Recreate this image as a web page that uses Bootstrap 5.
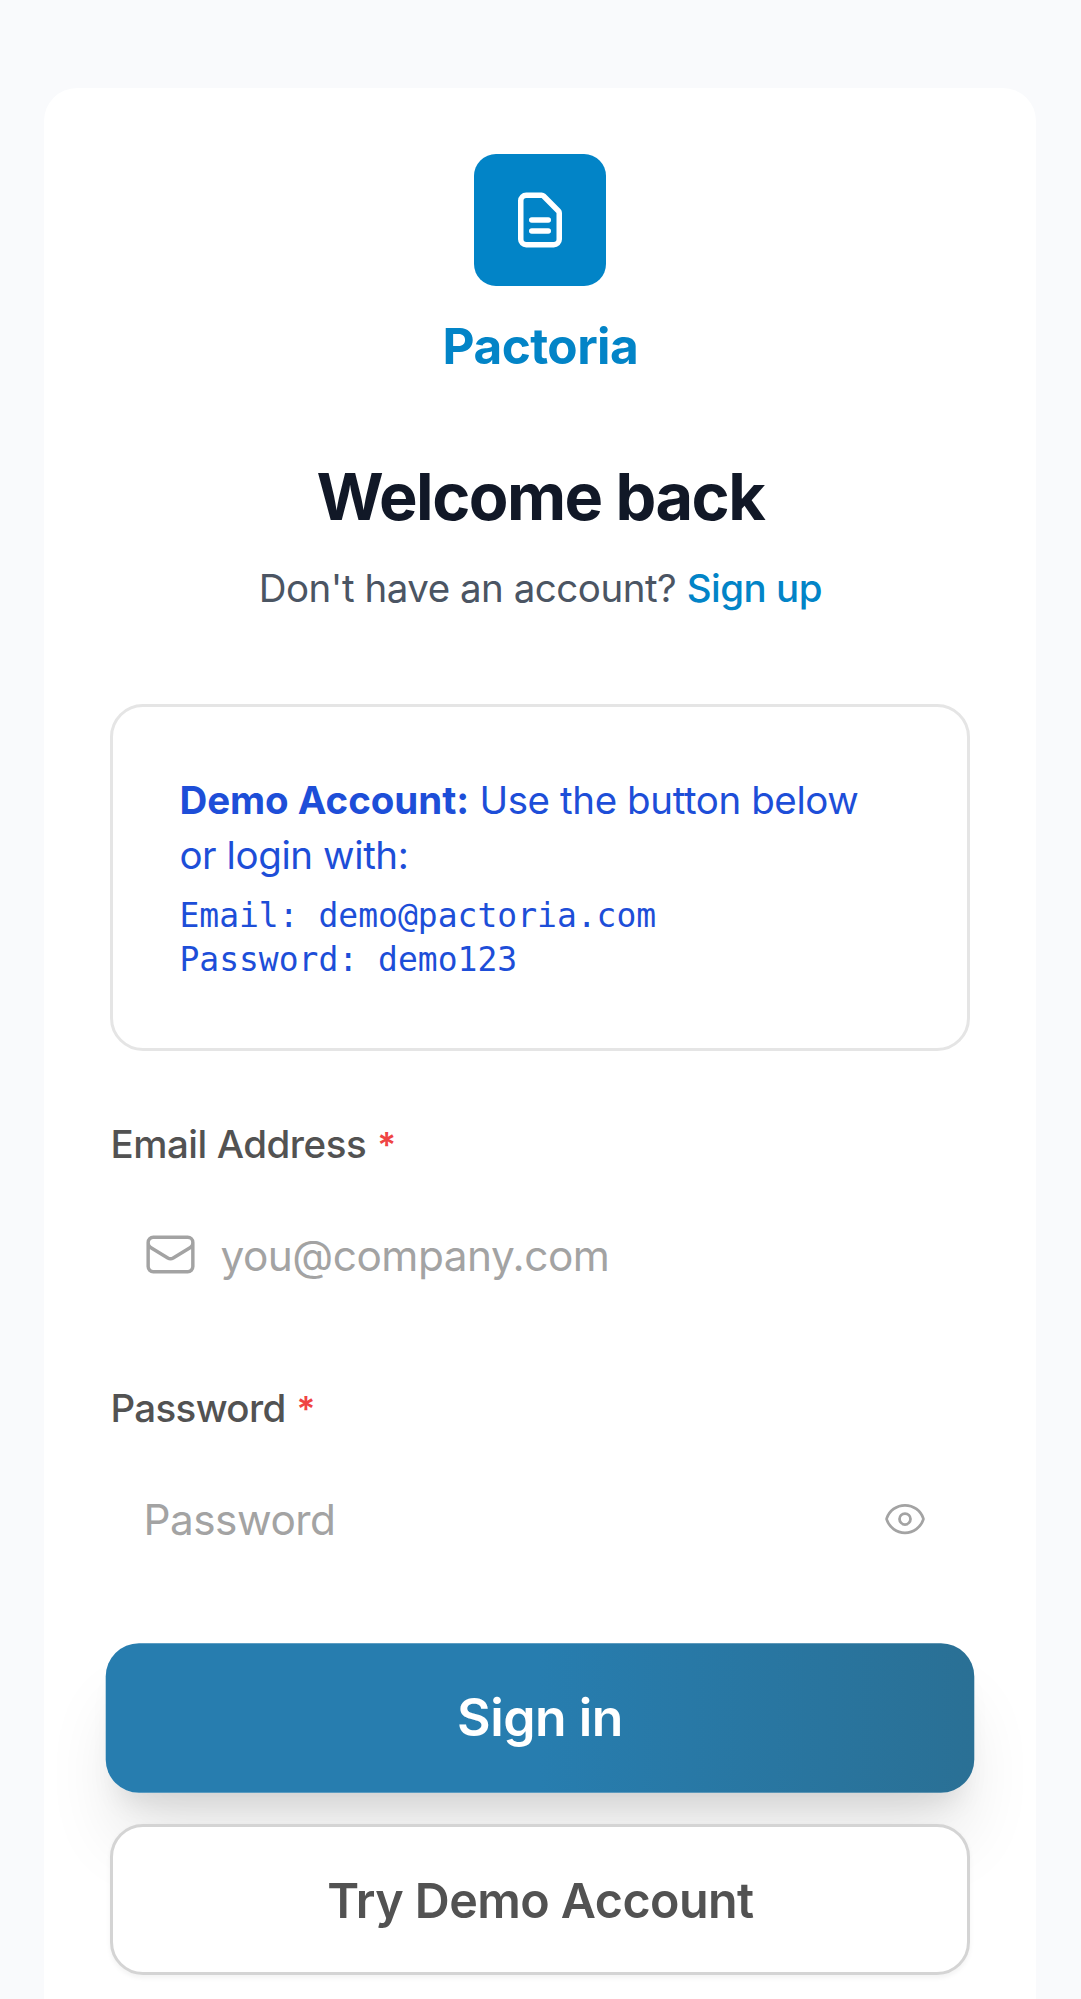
<!doctype html>
<html lang="en">
<head>
<meta charset="utf-8">
<meta name="viewport" content="width=device-width, initial-scale=1">
<title>Pactoria</title>
<link rel="stylesheet" href="https://cdn.jsdelivr.net/npm/bootstrap@5.3.0/dist/css/bootstrap.min.css">
<style>
body{background:#f9fafc;font-family:Inter,"Liberation Sans",sans-serif;font-size:38.5px;line-height:55px;letter-spacing:-.484px;color:#525252}
.login-page{padding:88px 44.6px 0 44.4px}
.login-card{border:0;border-radius:33px 33px 0 0;padding:66px 66px 0;background:#fff;min-height:1911px}
.logo-tile{width:132px;height:132px;border-radius:22px;background:#0284c7}
.brand-name{font-size:49.5px;line-height:66px;font-weight:700;letter-spacing:-.55px;color:#0284c7;margin-top:27px}
.welcome{font-size:64.8px;line-height:88px;font-weight:700;letter-spacing:-1.52px;color:#111827;margin:74px 0 0}
.signup-line{color:#4b5563;margin:20px 0 0}
.signup-line a{color:#0284c7;font-weight:500}
.demo-box{border:3px solid #e5e5e5;border-radius:33px;padding:66px;margin-top:88px;color:#1d4ed8;height:346.5px;letter-spacing:-.4px}
.demo-box strong{letter-spacing:-.05px}
.creds{font-family:"DejaVu Sans Mono",monospace;font-size:33px;line-height:44px;letter-spacing:0;margin-top:11px}
.field{margin-top:66px}
.field .form-label{display:block;font-weight:500;margin:0 0 22px;color:#525252}
.label-email{letter-spacing:-.45px}
.label-password{letter-spacing:-.65px}
.req{color:#ef4444;margin-left:11px;font-size:35px;font-weight:600;line-height:1}
.field-row{height:121px;padding:0 43px 0 33px}
.field-row .form-control{border:0;background:transparent;padding:3px 0 0;font-size:42.35px;line-height:60px;letter-spacing:-.484px;color:#525252;box-shadow:none}
.field-row .form-control::placeholder{color:#a3a3a3;opacity:1}
.mail-icon{margin-right:22px}
.eye-icon{margin-top:2px}
.btn-signin,.btn-demo{border-radius:33px;font-weight:600;letter-spacing:-.484px;padding:0}
.btn-signin,.btn-signin:hover{border:0;color:#fff;font-size:51.2px;height:148px;margin-top:65.5px;padding-bottom:2px;background:linear-gradient(90deg,#277daf 0,#277daf 50%,#2a7095 100%);box-shadow:0 55px 69px -10px rgba(0,0,0,.1),0 22px 27.5px -14px rgba(0,0,0,.1);transform:scale(1.01)}
.btn-demo,.btn-demo:hover{border:3px solid #d4d4d4;background:#fff;color:#525252;font-size:48.4px;letter-spacing:-.55px;height:151px;margin-top:32.4px;padding-top:2px;box-shadow:0 2.75px 5.5px rgba(0,0,0,.05);position:relative}
</style>
</head>
<body>
<main class="login-page">
  <div class="card login-card">
    <div class="d-flex flex-column align-items-center text-center">
      <div class="logo-tile d-flex align-items-center justify-content-center">
        <svg width="66" height="66" viewBox="0 0 24 24" fill="none" stroke="#fff" stroke-width="2" stroke-linecap="round" stroke-linejoin="round"><path d="M9 12h6m-6 4h6m2 5H7a2 2 0 01-2-2V5a2 2 0 012-2h5.586a1 1 0 01.707.293l5.414 5.414a1 1 0 01.293.707V19a2 2 0 01-2 2z"/></svg>
      </div>
      <div class="brand-name">Pactoria</div>
      <h1 class="welcome">Welcome back</h1>
      <p class="signup-line">Don't have an account? <a href="#" class="text-decoration-none">Sign up</a></p>
    </div>
    <div class="demo-box">
      <div><strong>Demo Account:</strong> Use the button below<br>or login with:</div>
      <div class="creds">Email: demo@pactoria.com<br>Password: demo123</div>
    </div>
    <form>
      <div class="field">
        <label class="form-label label-email" for="email">Email Address<span class="req">*</span></label>
        <div class="field-row d-flex align-items-center">
          <svg class="mail-icon flex-shrink-0" width="55" height="55" viewBox="0 0 24 24" fill="none" stroke="#a3a3a3" stroke-width="1.5" stroke-linecap="round" stroke-linejoin="round"><path d="M21.75 6.75v10.5a2.25 2.25 0 01-2.25 2.25h-15a2.25 2.25 0 01-2.25-2.25V6.75m19.5 0A2.25 2.25 0 0019.5 4.5h-15a2.25 2.25 0 00-2.25 2.25m19.5 0v.243a2.25 2.25 0 01-1.07 1.916l-7.5 4.615a2.25 2.25 0 01-2.36 0L3.32 8.91a2.25 2.25 0 01-1.07-1.916V6.75"/></svg>
          <input class="form-control" id="email" type="email" placeholder="you@company.com">
        </div>
      </div>
      <div class="field">
        <label class="form-label label-password" for="password">Password<span class="req">*</span></label>
        <div class="field-row d-flex align-items-center">
          <input class="form-control" id="password" type="password" placeholder="Password">
          <svg class="eye-icon flex-shrink-0" width="44" height="44" viewBox="0 0 24 24" fill="none" stroke="#a3a3a3" stroke-width="1.5" stroke-linecap="round" stroke-linejoin="round"><path d="M2.036 12.322a1.012 1.012 0 010-.639C3.423 7.51 7.36 4.5 12 4.5c4.638 0 8.573 3.007 9.963 7.178.07.207.07.431 0 .639C20.577 16.49 16.64 19.5 12 19.5c-4.638 0-8.573-3.007-9.963-7.178z"/><path d="M15 12a3 3 0 11-6 0 3 3 0 016 0z"/></svg>
        </div>
      </div>
      <button type="button" class="btn btn-signin w-100 d-flex align-items-center justify-content-center">Sign in</button>
      <button type="button" class="btn btn-demo w-100 d-flex align-items-center justify-content-center">Try Demo Account</button>
    </form>
  </div>
</main>
<script src="https://cdn.jsdelivr.net/npm/bootstrap@5.3.0/dist/js/bootstrap.bundle.min.js"></script>
</body>
</html>
